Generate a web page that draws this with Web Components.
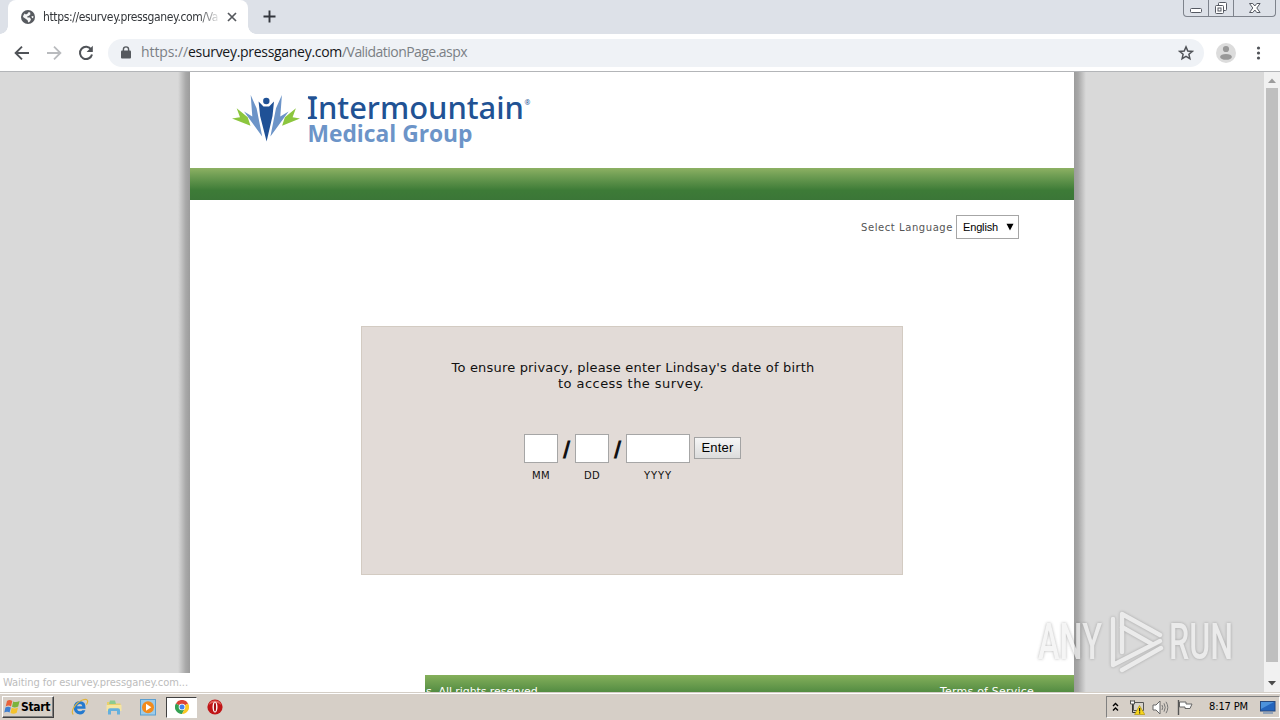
<!DOCTYPE html>
<html lang="en">
<head>
<meta charset="utf-8">
<title>https://esurvey.pressganey.com/ValidationPage.aspx</title>
<style>
  html, body { margin: 0; height: 100%; }
  body { overflow: hidden; font-family: "DejaVu Sans", sans-serif; color: #111; }
</style>
</head>
<body>
<desktop-screen></desktop-screen>

<script>
/**
 * <fit-text width="120"> - one line of text, tracked to an exact width
 */
class FitText extends HTMLElement {
  constructor() {
    super();
    this.attachShadow({ mode: 'open' });
  }

  connectedCallback() {
    const width = parseFloat(this.getAttribute('width'));
    this.shadowRoot.innerHTML = `<style>
      :host { display: block; flex: none; white-space: nowrap; width: ${width}px; text-align: left; }
      span { display: inline-block; }
    </style><span><slot></slot></span>`;
    const span = this.shadowRoot.querySelector('span');
    const natural = span.getBoundingClientRect().width;
    const count = this.textContent.length;
    if (natural && count) {
      span.style.letterSpacing = ((width - natural) / count) + 'px';
    }
  }
}

/**
 * <tab-strip> - title bar with one open tab and the window buttons
 */
class TabStrip extends HTMLElement {
  constructor() {
    super();
    this.attachShadow({ mode: 'open' });
  }

  connectedCallback() {
    this.shadowRoot.innerHTML = `
      <style>
        :host {
          display: flex;
          height: 34px;
          padding-left: 8px;
          background: #dde1e8;
          box-sizing: border-box;
        }
        .tab {
          display: flex;
          align-items: center;
          width: 240px;
          box-sizing: border-box;
          padding: 0 10px 0 13px;
          background: #fff;
          border-radius: 8px 8px 0 0;
          position: relative;
        }
        .tab::before, .tab::after {
          content: '';
          position: absolute;
          bottom: 0;
          width: 8px;
          height: 8px;
        }
        .tab::before { left: -8px; background: radial-gradient(circle at 0 0, #dde1e8 7.5px, #fff 8px); }
        .tab::after { right: -8px; background: radial-gradient(circle at 100% 0, #dde1e8 7.5px, #fff 8px); }
        .title {
          margin-left: 8px;
          width: 176px;
          font: 12px/16px "DejaVu Sans Condensed", "DejaVu Sans", sans-serif;
          color: #33363a;
          -webkit-mask-image: linear-gradient(90deg, #000 155px, transparent 178px);
          mask-image: linear-gradient(90deg, #000 155px, transparent 178px);
        }
        .close { margin-left: 8px; }
        .plus { margin: 10px 0 0 15px; }
        .buttons {
          display: flex;
          margin-left: auto;
          margin-right: 4px;
          height: 17px;
          box-sizing: border-box;
          border: 1px solid #7e838c;
          border-top: 0;
          border-radius: 0 0 4px 4px;
          overflow: hidden;
        }
        .buttons div { width: 24px; border-right: 1px solid #7e838c; }
        .buttons div:last-child { width: 41px; border: 0; }
        svg { display: block; flex: none; }
      </style>
      <div class="tab">
        <svg width="14" height="14" viewBox="0 0 14 14">
          <circle cx="7" cy="7" r="7" fill="#575a5f"/>
          <path d="M2 7 Q2 5 3.6 3.4 L5 4.4 L7 3.2 L7.6 1.9 L9.2 2.4 L9.4 4.6 L8 5.8 L6.2 6.4 L6.4 7.4 L8.8 7.6 L10 9.3 L9 11.6 L7.2 12.5 L6.6 10.2 L4.6 8.8 Z" fill="#f5f5f5"/>
          <path d="M10.4 6.2 L12.4 6 L12.2 8.2 L11 8 Z" fill="#f5f5f5"/>
        </svg>
        <div class="title"><fit-text width="175">https://esurvey.pressganey.com/Va</fit-text></div>
        <svg class="close" width="10" height="10" viewBox="0 0 10 10">
          <path d="M1 1 L9 9 M9 1 L1 9" stroke="#55585d" stroke-width="1.7"/>
        </svg>
      </div>
      <svg class="plus" width="13" height="13" viewBox="0 0 13 13">
        <path d="M6.5 .5 V12.5 M.5 6.5 H12.5" stroke="#33363d" stroke-width="1.9"/>
      </svg>
      <div class="buttons">
        <div><svg width="24" height="16"><rect x="6.5" y="8.5" width="11" height="4" rx="1" fill="#fff" stroke="#555962"/></svg></div>
        <div><svg width="24" height="16"><rect x="9.5" y="2.5" width="8" height="8" rx="1" fill="#fff" stroke="#555962"/><rect x="6.5" y="5.5" width="8" height="8" rx="1" fill="#fff" stroke="#555962"/><rect x="9" y="8" width="3" height="3" fill="#fff" stroke="#555962"/></svg></div>
        <div><svg width="41" height="16"><path d="M15.5 3.5 h3.3 l2 2.5 l2-2.5 h3.3 l-3.3 4.5 l3.3 4.5 h-3.3 l-2-2.5 l-2 2.5 h-3.3 l3.3-4.5 Z" fill="#fff" stroke="#555962"/></svg></div>
      </div>
    `;
  }
}

/**
 * <address-bar> - navigation buttons and the omnibox
 */
class AddressBar extends HTMLElement {
  constructor() {
    super();
    this.attachShadow({ mode: 'open' });
  }

  connectedCallback() {
    this.shadowRoot.innerHTML = `
      <style>
        :host {
          display: flex;
          align-items: center;
          height: 38px;
          padding: 0 19px 0 14px;
          box-sizing: border-box;
          background: #fff;
          border-bottom: 1px solid #b3b5b8;
        }
        svg { display: block; flex: none; }
        .nav { margin-right: 16px; }
        .nav.reload { margin-right: 14px; }
        .box {
          flex: 1;
          display: flex;
          align-items: center;
          height: 28px;
          box-sizing: border-box;
          padding: 0 10px 0 13px;
          border-radius: 14px;
          background: #eff2f6;
          font: 14px/20px "Open Sans", sans-serif;
          color: #7b8085;
        }
        .url { display: flex; margin: -2px auto 0 10px; }
        .host { color: #15171a; }
        .avatar { margin: 0 20px 0 12px; }
      </style>
      <svg class="nav" width="16" height="16" viewBox="0 0 16 16"><path d="M15 8 H2 M8 1.6 L1.6 8 L8 14.4" fill="none" stroke="#505358" stroke-width="1.9"/></svg>
      <svg class="nav" width="16" height="16" viewBox="0 0 16 16"><path d="M1 8 H14 M8 1.6 L14.4 8 L8 14.4" fill="none" stroke="#b9bbbe" stroke-width="1.8"/></svg>
      <svg class="nav reload" width="16" height="16" viewBox="0 0 16 16"><path d="M13.2 4.6 A6.1 6.1 0 1 0 14 9.4" fill="none" stroke="#505358" stroke-width="2"/><path d="M14.8 .8 V7 H8.6 Z" fill="#505358"/></svg>
      <div class="box">
        <svg width="10" height="13" viewBox="0 0 10 13"><rect x="0" y="4.6" width="10" height="8" rx="1" fill="#55595e"/><path d="M2.4 5 V3.5 a2.6 2.6 0 0 1 5.2 0 V5" fill="none" stroke="#55595e" stroke-width="1.4"/></svg>
        <div class="url"><fit-text width="47">https://</fit-text><fit-text class="host" width="154">esurvey.pressganey.com</fit-text><fit-text width="125">/ValidationPage.aspx</fit-text></div>
        <svg width="16" height="16" viewBox="0 0 16 16"><path d="M8 1.9 L9.8 6 L14.3 6.4 L10.9 9.3 L11.9 13.7 L8 11.4 L4.1 13.7 L5.1 9.3 L1.7 6.4 L6.2 6 Z" fill="none" stroke="#505358" stroke-width="1.5"/></svg>
      </div>
      <svg class="avatar" width="20" height="20" viewBox="0 0 20 20"><circle cx="10" cy="10" r="10" fill="#dcdcdc"/><circle cx="10" cy="6" r="3.1" fill="#989898"/><ellipse cx="10" cy="13.9" rx="5.9" ry="2.9" fill="#989898"/></svg>
      <svg width="5" height="16" viewBox="0 0 5 16"><g fill="#505358"><circle cx="2.5" cy="3" r="1.6"/><circle cx="2.5" cy="8" r="1.6"/><circle cx="2.5" cy="13" r="1.6"/></g></svg>
    `;
  }
}

/**
 * <brand-logo> - figure mark and the two-line word mark
 */
class BrandLogo extends HTMLElement {
  constructor() {
    super();
    this.attachShadow({ mode: 'open' });
  }

  connectedCallback() {
    this.shadowRoot.innerHTML = `
      <style>
        :host { display: block; }
        svg { display: block; }
      </style>
      <svg width="302" height="62" viewBox="0 0 302 62">
        <g fill="#8cc63e">
          <path d="M4.7 18.3 L15.7 27.3 L18.5 35.7 L0 28.5 L8 27.3 Z"/>
          <path d="M63.9 18.3 L52.9 27.3 L50.1 35.7 L68 28.5 L60.6 27.3 Z"/>
        </g>
        <g fill="#6c94c8">
          <path d="M18.7 5 L24.6 18.3 L30.2 46.5 L12 21.5 L20.3 26.5 Z"/>
          <path d="M49.9 5 L44 18.3 L38.4 46.5 L56.6 21.5 L48.3 26.5 Z"/>
        </g>
        <path d="M26.6 11.5 L31.5 16.4 H37.1 L42 11.5 L40.5 26 L34.6 51.5 L28.1 26 Z" fill="#1f5196"/>
        <circle cx="34.3" cy="11" r="3.2" fill="#1f5196"/>
        <g fill="#215294">
          <text x="75" y="29" font-family="Noto Sans, sans-serif" font-size="31.5" font-weight="500" textLength="217" lengthAdjust="spacingAndGlyphs">Intermountain</text>
          <path d="M76 6.3 h8.4 v1.8 h-8.4 Z M76 27.2 h8.4 v1.8 h-8.4 Z"/>
          <text x="292.5" y="14.5" font-family="Noto Sans, sans-serif" font-size="7">®</text>
        </g>
        <text x="75.5" y="51.8" font-family="Open Sans, sans-serif" font-size="22.5" font-weight="700" fill="#6c94c8" textLength="165" lengthAdjust="spacingAndGlyphs">Medical Group</text>
      </svg>
    `;
  }
}

/**
 * <date-part label="MM" size="34"> - text box with its caption below
 */
class DatePart extends HTMLElement {
  constructor() {
    super();
    this.attachShadow({ mode: 'open' });
  }

  connectedCallback() {
    const label = this.getAttribute('label');
    const size = this.getAttribute('size');
    const labelWidth = this.getAttribute('label-width');
    this.shadowRoot.innerHTML = `
      <style>
        :host { display: block; width: ${size}px; }
        input {
          display: block;
          width: 100%;
          height: 29px;
          box-sizing: border-box;
          margin: 0 0 6px;
          border: 1px solid #a6a6a6;
          border-radius: 0;
          background: #fff;
        }
        label { display: flex; justify-content: center; font-size: 10px; line-height: 13px; }
      </style>
      <input id="part" type="text">
      <label for="part"><fit-text width="${labelWidth}">${label}</fit-text></label>
    `;
  }
}

/**
 * <birth-date-form> - the privacy prompt with the date boxes
 */
class BirthDateForm extends HTMLElement {
  constructor() {
    super();
    this.attachShadow({ mode: 'open' });
  }

  connectedCallback() {
    this.shadowRoot.innerHTML = `
      <style>
        :host {
          display: block;
          width: 542px;
          height: 249px;
          box-sizing: border-box;
          padding-top: 33px;
          border: 1px solid #d3cbc2;
          background: #e2dbd7;
        }
        .prompt {
          display: flex;
          flex-direction: column;
          align-items: center;
          font-size: 13px;
          line-height: 16px;
        }
        .first { margin-left: 2px; }
        .second { margin-right: 2px; }
        .row { display: flex; margin: 42px 0 0 162px; }
        .slash { width: 17px; height: 31px; font: bold 24px/31px "Liberation Sans", sans-serif; text-align: center; transform: skewX(-5deg); }
        button {
          display: flex;
          align-items: center;
          justify-content: center;
          margin: 3px 0 0 4px;
          width: 47px;
          height: 22px;
          padding: 0;
          border: 1px solid #a3a3a3;
          border-radius: 0;
          background: linear-gradient(#f6f6f6, #dcdcdc);
          font: 13px/18px "Liberation Sans", sans-serif;
          color: #000;
        }
      </style>
      <div class="prompt">
        <fit-text class="first" width="363">To ensure privacy, please enter Lindsay's date of birth</fit-text>
        <fit-text class="second" width="146">to access the survey.</fit-text>
      </div>
      <div class="row">
        <date-part label="MM" size="34" label-width="18"></date-part>
        <div class="slash">/</div>
        <date-part label="DD" size="34" label-width="16"></date-part>
        <div class="slash">/</div>
        <date-part label="YYYY" size="64" label-width="28"></date-part>
        <button><fit-text width="32">Enter</fit-text></button>
      </div>
    `;
  }
}

/**
 * <survey-page> - the site content in the browser viewport
 */
class SurveyPage extends HTMLElement {
  constructor() {
    super();
    this.attachShadow({ mode: 'open' });
  }

  connectedCallback() {
    this.shadowRoot.innerHTML = `
      <style>
        :host { display: flex; justify-content: center; background: #d9d9d9; overflow: hidden; }
        .edge { width: 12px; background: linear-gradient(90deg, #9c9c9c, #a8a8a8 35%, #d9d9d9); }
        .edge.left { transform: scaleX(-1); }
        .sheet { width: 884px; background: #fff; }
        header { height: 96px; padding: 18px 0 0 42px; box-sizing: border-box; }
        .band { height: 32px; background: linear-gradient(#8db163 0, #6e9d53 25%, #3d7b37 70%, #3b7637); }
        .language {
          display: flex;
          justify-content: flex-end;
          align-items: center;
          gap: 3px;
          height: 24px;
          padding: 15px 55px 87px 0;
          font-size: 10px;
          color: #555;
        }
        .select {
          display: flex;
          align-items: center;
          justify-content: space-between;
          width: 63px;
          height: 24px;
          box-sizing: border-box;
          padding: 0 4px 0 6px;
          border: 1px solid #a6a6a6;
          background: #fff;
          font: 11px/22px "Liberation Sans", sans-serif;
          color: #000;
        }
        birth-date-form { margin: 0 auto 100px 171px; }
        footer {
          display: flex;
          justify-content: space-between;
          height: 42px;
          padding: 9px 40px 0 236px;
          box-sizing: border-box;
          background: linear-gradient(#85b05b, #3f7d38 24px);
          font-size: 11px;
          line-height: 15px;
          color: #fff;
        }
      </style>
      <div class="edge left"></div>
      <div class="sheet">
        <header><brand-logo></brand-logo></header>
        <div class="band"></div>
        <div class="language">
          <fit-text width="92">Select Language</fit-text>
          <div class="select">
            <fit-text width="35">English</fit-text>
            <svg width="8" height="8" viewBox="0 0 8 8"><path d="M.5 .8 H7.5 L4 7.4 Z" fill="#000"/></svg>
          </div>
        </div>
        <birth-date-form></birth-date-form>
        <footer>
          <fit-text width="115">s. All rights reserved.</fit-text>
          <fit-text width="94">Terms of Service</fit-text>
        </footer>
      </div>
      <div class="edge"></div>
    `;
  }
}

/**
 * <page-scrollbar> - vertical scroll bar, nearly full height thumb
 */
class PageScrollbar extends HTMLElement {
  constructor() {
    super();
    this.attachShadow({ mode: 'open' });
  }

  connectedCallback() {
    this.shadowRoot.innerHTML = `
      <style>
        :host { display: flex; flex-direction: column; align-items: center; width: 16px; background: #f1f1f1; }
        .thumb { width: 12px; flex: 1; margin-bottom: 12px; background: #bfbfbf; }
        svg { display: block; }
      </style>
      <svg width="16" height="16"><path d="M4 11 L8 6.5 L12 11 Z" fill="#9c9c9c"/></svg>
      <div class="thumb"></div>
      <svg width="16" height="18"><path d="M4 7 H12 L8 11.5 Z" fill="#4b4b4b"/></svg>
    `;
  }
}

/**
 * <task-bar> - start button, pinned programs and the tray
 */
class TaskBar extends HTMLElement {
  constructor() {
    super();
    this.attachShadow({ mode: 'open' });
  }

  connectedCallback() {
    this.shadowRoot.innerHTML = `
      <style>
        :host {
          display: flex;
          align-items: center;
          height: 28px;
          box-sizing: border-box;
          padding: 1px 0 0 2px;
          border-top: 1px solid #d4cec6;
          background: linear-gradient(#fff 1px, #d6cfc7 1px);
        }
        svg { display: block; flex: none; }
        .start {
          display: flex;
          align-items: center;
          width: 52px;
          height: 22px;
          box-sizing: border-box;
          padding-left: 1px;
          border: 1px solid;
          border-color: #fff #404040 #404040 #fff;
          box-shadow: inset -1px -1px #808080;
          font: bold 12px/18px "DejaVu Sans Condensed", "DejaVu Sans", sans-serif;
          color: #000;
        }
        .apps { display: flex; align-items: center; margin-left: 9px; }
        .app { display: flex; justify-content: center; width: 34px; }
        .app.open {
          width: 31px;
          height: 21px;
          align-items: center;
          margin: 0 1px;
          box-sizing: border-box;
          border: 1px solid;
          border-color: #404040 #fff #fff #404040;
          background: #fff;
        }
        .tray {
          display: flex;
          align-items: center;
          margin-left: auto;
          width: 174px;
          height: 22px;
          box-sizing: border-box;
          padding-left: 5px;
          border: 1px solid;
          border-color: #808080 #fff #fff #808080;
          font: 11px/16px "DejaVu Sans Condensed", "DejaVu Sans", sans-serif;
          color: #000;
        }
        .net { margin-left: 10px; }
        .sound { margin-left: 7px; }
        .flag { margin-left: 8px; }
        .clock { margin-left: 16px; }
        .screen { margin-left: 12px; }
      </style>
      <div class="start">
        <svg width="17" height="16" viewBox="0 0 17 16">
          <path d="M3 2 Q5.5 .2 8.3 2 L7 7.4 Q4.5 5.8 1.7 7.4 Z" fill="#e8623a"/>
          <path d="M9.2 2.4 Q12 3.7 15.6 2 L14.2 7.4 Q11 9.2 8 7.8 Z" fill="#7bb33c"/>
          <path d="M1.4 8.4 Q4.3 6.9 6.8 8.5 L5.6 13.5 Q3.2 12.2 .3 13.5 Z" fill="#3f7fd0"/>
          <path d="M7.7 8.8 Q10.7 10.2 14 8.6 L12.7 13.7 Q9.7 15.4 6.5 14 Z" fill="#f4c22d"/>
        </svg>
        <fit-text width="29">Start</fit-text>
      </div>
      <div class="apps">
        <div class="app"><svg width="18" height="18" viewBox="0 0 18 18">
          <path d="M14.6 10.7 H6 Q6.4 13.2 9 13.2 Q10.7 13.2 11.4 12.2 H14.4 Q12.8 16.5 8.8 16.4 Q2.7 16 2.7 9.6 Q2.9 3.1 9 3 Q15 3.4 14.6 10.7 Z M6 8.2 H11.4 Q11 5.9 8.8 5.9 Q6.4 6 6 8.2 Z" fill="#2379cf" fill-rule="evenodd"/>
          <path d="M2.3 16.5 C-1 13 5 4.5 11.5 2 C16.8 .2 17.8 3 15.4 6.6" fill="none" stroke="#e0b43c" stroke-width="1.2"/>
        </svg></div>
        <div class="app"><svg width="18" height="17" viewBox="0 0 18 17">
          <path d="M2 3 H7 L8.5 4.5 H15.5 V9 H2 Z" fill="#e9cf6b"/>
          <path d="M5 1.5 H10 L11 5 H4 Z" fill="#8ccb8e"/>
          <path d="M1.5 6 H16.5 V12 H1.5 Z" fill="#f6e5a0"/>
          <path d="M3 15.5 V11 Q3 9.3 5 9.3 H13 Q15 9.3 15 11 V15.5 H12 V12 H6 V15.5 Z" fill="#64b0dd"/>
        </svg></div>
        <div class="app"><svg width="16" height="17" viewBox="0 0 16 17">
          <rect x=".5" y=".5" width="15" height="15.5" fill="#9ccbe9" stroke="#5b9fd0"/>
          <circle cx="8" cy="8.3" r="6" fill="#f28b1d"/>
          <path d="M6 4.8 L11.3 8.3 L6 11.8 Z" fill="#fff"/>
        </svg></div>
        <div class="app open"><svg width="14" height="14" viewBox="0 0 14 14">
          <path d="M7 7 L.9 3.5 A7 7 0 0 1 13.1 3.5 Z" fill="#dc4437"/>
          <path d="M7 7 L.9 3.5 A7 7 0 0 0 7 14 L10 8.6 Z" fill="#34a153"/>
          <path d="M7 7 L13.1 3.5 A7 7 0 0 1 7 14 L9.5 9 Z" fill="#fbc824"/>
          <circle cx="7" cy="7" r="3.3" fill="#fff"/>
          <circle cx="7" cy="7" r="2.5" fill="#4383ee"/>
        </svg></div>
        <div class="app"><svg width="16" height="16" viewBox="0 0 16 16">
          <circle cx="8" cy="8" r="7.6" fill="#c01517"/>
          <path d="M1.5 6 A7 7 0 0 1 14.5 6 Q8 1 1.5 6 Z" fill="#e0605a"/>
          <ellipse cx="8" cy="8" rx="2.5" ry="5.6" fill="#fff"/>
          <ellipse cx="8" cy="8" rx="1.1" ry="4.5" fill="#a50f12"/>
        </svg></div>
      </div>
      <div class="tray">
        <svg width="7" height="10" viewBox="0 0 7 10"><path d="M1 4 L3.5 1.5 L6 4 M1 8.5 L3.5 6 L6 8.5" fill="none" stroke="#000" stroke-width="1.4"/></svg>
        <svg class="net" width="16" height="16" viewBox="0 0 16 16">
          <path d="M4.5 3.5 H14.5 V11.5 H4.5 Z" fill="#d8d4cc" stroke="#555"/>
          <path d="M1.5 1.5 V4.5 H5.5 V1.5 M3.5 4.5 V13.5 H7" fill="none" stroke="#333"/>
          <path d="M1.5 2 H5.5 V5 H1.5 Z" fill="#fff" stroke="#555"/>
          <path d="M10.5 6.5 L15.8 15.5 H5.6 Z" fill="#f7d51d" stroke="#a88a00" stroke-width=".6"/>
          <path d="M10.6 9 V12.4 M10.6 13.2 V14.5" stroke="#222" stroke-width="1.2"/>
        </svg>
        <svg class="sound" width="17" height="15" viewBox="0 0 17 15">
          <path d="M1 5 H4 L8 1 V14 L4 10 H1 Z" fill="#fff" stroke="#666"/>
          <path d="M10 5 Q11.4 7.5 10 10 M12 3.3 Q14.5 7.5 12 11.7 M14 1.8 Q17.6 7.5 14 13.2" fill="none" stroke="#777"/>
        </svg>
        <svg class="flag" width="16" height="15" viewBox="0 0 16 15">
          <path d="M2.5 2 H9 V4 H15 L13 8.5 H8 V7 H2.5 Z" fill="#fff" stroke="#666"/>
          <path d="M1.5 0 V15" stroke="#555" stroke-width="1.4"/>
        </svg>
        <fit-text class="clock" width="39">8:17 PM</fit-text>
        <svg class="screen" width="16" height="13" viewBox="0 0 16 13">
          <rect x=".5" y=".5" width="14.5" height="9.5" fill="#2465bd" stroke="#27497e"/>
          <path d="M1 1 H14 L1 8 Z" fill="#4c92dc"/>
          <path d="M3 12 H13" stroke="#7590b3" stroke-width="1.4"/>
        </svg>
      </div>
    `;
  }
}

/**
 * <run-watermark> - translucent mark lying over the lower right corner
 */
class RunWatermark extends HTMLElement {
  constructor() {
    super();
    this.attachShadow({ mode: 'open' });
  }

  connectedCallback() {
    this.shadowRoot.innerHTML = `
      <style>
        :host { display: block; position: absolute; left: 1034px; top: 606px; pointer-events: none; }
        svg { display: block; filter: drop-shadow(0 0 1.5px rgba(90, 90, 90, 0.6)); opacity: 0.72; }
      </style>
      <svg width="204" height="70" viewBox="0 0 204 70">
        <g fill="#f2f2f2" font-family="Roboto, sans-serif" font-size="50" font-weight="500">
          <text x="4" y="53" textLength="64" lengthAdjust="spacingAndGlyphs">ANY</text>
          <text x="135" y="53" textLength="64" lengthAdjust="spacingAndGlyphs">RUN</text>
        </g>
        <g fill="none" stroke="#f2f2f2" stroke-width="4.5" stroke-linecap="round" stroke-linejoin="round">
          <path d="M79 13 V59 L126 35"/>
          <path d="M126 29 L88 8 V46"/>
          <path d="M88 21 L118 38"/>
          <path d="M88 64 L127 42"/>
        </g>
      </svg>
    `;
  }
}

/**
 * <desktop-screen> - browser window above the task bar
 */
class DesktopScreen extends HTMLElement {
  constructor() {
    super();
    this.attachShadow({ mode: 'open' });
  }

  connectedCallback() {
    this.shadowRoot.innerHTML = `
      <style>
        :host { display: flex; flex-direction: column; width: 1280px; height: 720px; position: relative; overflow: hidden; }
        .view { display: flex; height: 620px; position: relative; overflow: hidden; }
        survey-page { flex: 1; }
        .status {
          position: absolute;
          left: 0;
          bottom: 0;
          width: 425px;
          height: 19px;
          box-sizing: border-box;
          padding-left: 3px;
          background: #fff;
          font: 11px/20px "DejaVu Sans Condensed", "DejaVu Sans", sans-serif;
          color: #bcbcbc;
        }
      </style>
      <tab-strip></tab-strip>
      <address-bar></address-bar>
      <div class="view">
        <survey-page></survey-page>
        <page-scrollbar></page-scrollbar>
        <div class="status"><fit-text width="185">Waiting for esurvey.pressganey.com...</fit-text></div>
      </div>
      <task-bar></task-bar>
      <run-watermark></run-watermark>
    `;
  }
}

customElements.define('fit-text', FitText);
customElements.define('tab-strip', TabStrip);
customElements.define('address-bar', AddressBar);
customElements.define('brand-logo', BrandLogo);
customElements.define('date-part', DatePart);
customElements.define('birth-date-form', BirthDateForm);
customElements.define('survey-page', SurveyPage);
customElements.define('page-scrollbar', PageScrollbar);
customElements.define('task-bar', TaskBar);
customElements.define('run-watermark', RunWatermark);
customElements.define('desktop-screen', DesktopScreen);
</script>
</body>
</html>
